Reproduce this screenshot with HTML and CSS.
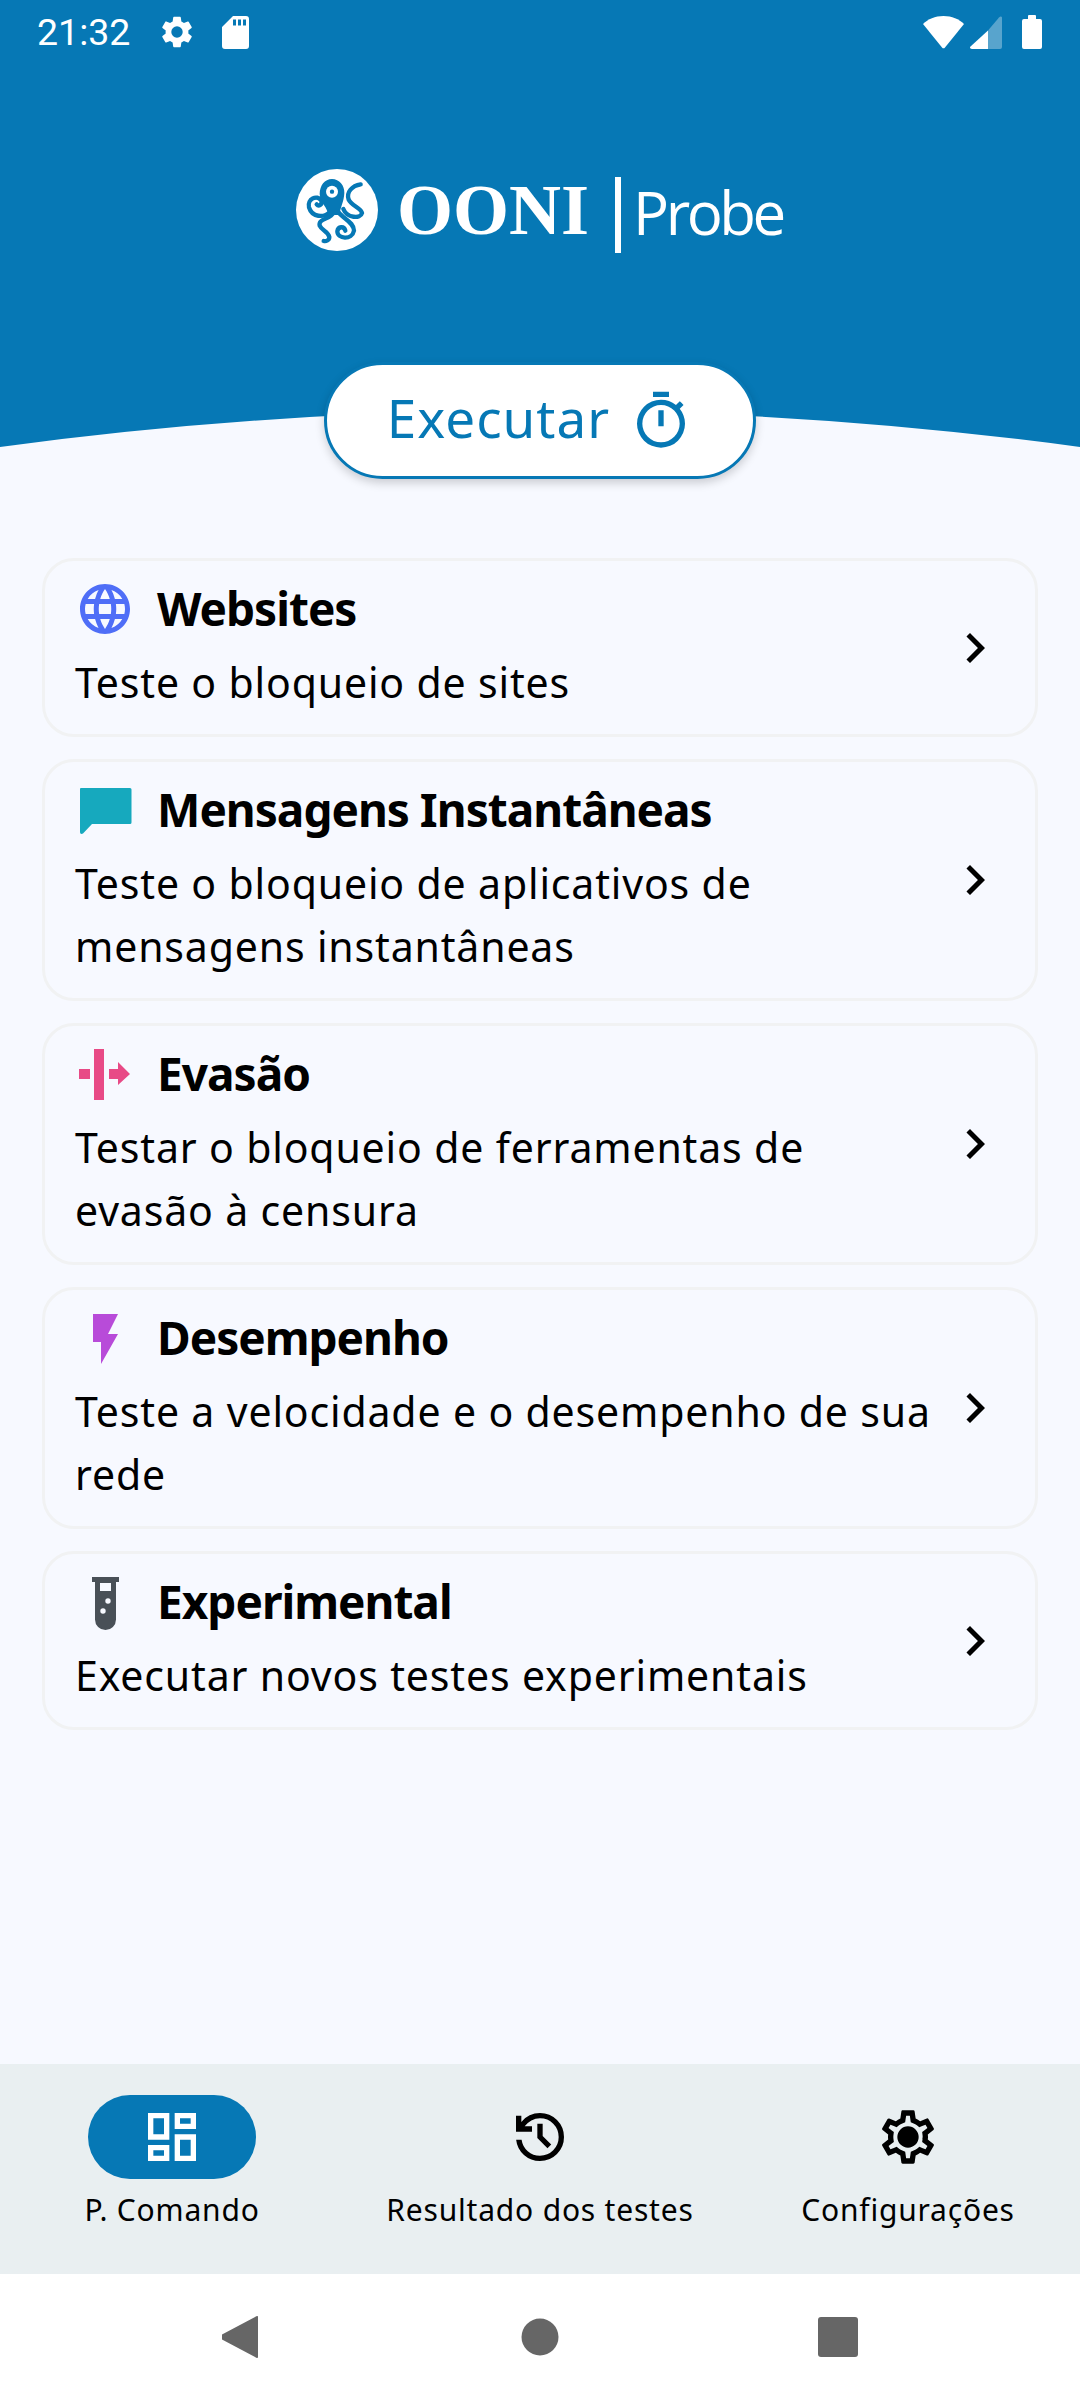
FILE: index.html
```html
<!DOCTYPE html>
<html lang="pt">
<head>
<meta charset="utf-8">
<title>OONI Probe</title>
<link rel="stylesheet" href="styles.css">
</head>
<body>
<div class="screen">
  <header class="hero">
    <div class="status">
      <span class="time">21:32</span>
      <svg class="st-gear" viewBox="0 0 24 24"><path fill="#fff" d="M19.14 12.94c.04-.3.06-.61.06-.94s-.02-.64-.07-.94l2.03-1.58a.49.49 0 0 0 .12-.61l-1.92-3.32a.49.49 0 0 0-.59-.22l-2.39.96a7 7 0 0 0-1.62-.94l-.36-2.54a.48.48 0 0 0-.48-.41h-3.84a.47.47 0 0 0-.47.41l-.36 2.54c-.59.24-1.13.57-1.62.94l-2.39-.96a.48.48 0 0 0-.59.22L2.74 8.87a.47.47 0 0 0 .12.61l2.03 1.58c-.05.3-.09.63-.09.94s.02.64.07.94l-2.03 1.58a.49.49 0 0 0-.12.61l1.92 3.32c.12.22.37.29.59.22l2.39-.96c.5.38 1.03.7 1.62.94l.36 2.54c.05.24.24.41.48.41h3.84c.24 0 .44-.17.47-.41l.36-2.54c.59-.24 1.13-.56 1.62-.94l2.39.96c.22.08.47 0 .59-.22l1.92-3.32a.47.47 0 0 0-.12-.61l-2.01-1.58zM12 15.6A3.6 3.6 0 1 1 12 8.4a3.6 3.6 0 0 1 0 7.2z"/></svg>
      <svg class="st-sd" viewBox="0 0 27 33"><path fill="#fff" fill-rule="evenodd" d="M11 0h13a3 3 0 0 1 3 3v27a3 3 0 0 1-3 3H3a3 3 0 0 1-3-3V11zM11 3.500v6h3v-6zM16 3.500v6h3v-6zM21 3.500v6h3v-6z"/></svg>
      <span class="status-gap"></span>
      <svg class="st-wifi" viewBox="0 0 41 33"><path fill="#fff" d="M0 8C5 3 12 0 20.500 0S36 3 41 8L22 31.500a2 2 0 0 1-3 0z"/></svg>
      <svg class="st-signal" viewBox="0 0 32 33"><path fill="#fff" fill-opacity=".33" d="M32 2v29a2 2 0 0 1-2 2H18V14.500L29 1.500C30.500 0 32 .5 32 2z"/><path fill="#fff" d="M18 14.500V33H2C0 33-.5 31.500.5 30.500z"/></svg>
      <svg class="st-batt" viewBox="0 0 20 34"><path fill="#fff" d="M6 1a1 1 0 0 1 1-1h6a1 1 0 0 1 1 1v3h4a2 2 0 0 1 2 2v26a2 2 0 0 1-2 2H2a2 2 0 0 1-2-2V6a2 2 0 0 1 2-2h4z"/></svg>
    </div>
    <div class="logo">
      <svg class="octopus" viewBox="22 20 246 246">
        <circle cx="145" cy="143" r="123" fill="#fff"/>
        <g fill="none" stroke="#0678b5" stroke-width="13" stroke-linecap="round" stroke-linejoin="round">
          <path d="M125 148C105 168 70 165 61 135C55 110 85 95 98 115C102 127 90 133 84 126"/>
          <path d="M216 66C190 70 172 90 180 112C188 130 218 138 220 152C216 170 175 168 164 140"/>
          <path d="M135 150C125 172 88 168 93 190C100 206 118 206 122 224C122 234 112 238 105 236"/>
          <path d="M150 150C165 170 196 180 196 205C190 235 146 230 146 207C148 192 166 190 170 205"/>
        </g>
        <path fill="#0678b5" d="M93 95C93 70 108 50 130 50C152 50 168 70 167 92C166 118 155 135 152 158H118C118 135 95 125 93 95z"/>
        <circle cx="130" cy="88" r="18" fill="#fff"/>
        <circle cx="130" cy="88" r="6.500" fill="#0678b5"/>
      </svg>
      <span class="ooni">OONI</span>
      <span class="divider"></span>
      <span class="probe">Probe</span>
    </div>
    <svg class="curve" viewBox="0 0 1080 37" preserveAspectRatio="none"><path fill="#f7f9ff" d="M0 37Q540-36 1080 37z"/></svg>
    <button class="run" type="button">
      <span class="run-label">Executar</span>
      <svg class="timer" viewBox="0 0 24 24"><path fill="#0678b5" d="M15 1H9v2h6V1zm-4 13h2V8h-2v6zm8.030-6.610 1.420-1.420c-.43-.51-.9-.99-1.410-1.410l-1.420 1.420A8.960 8.960 0 0 0 12 4a9 9 0 1 0 9 9c0-2.120-.74-4.070-1.970-5.610zM12 20a7 7 0 1 1 0-14 7 7 0 0 1 0 14z"/></svg>
    </button>
  </header>

  <main class="list">
    <a class="card">
      <div class="card-body">
        <div class="title-row">
          <svg class="ic" viewBox="0 0 24 24"><path fill="#4f6ef7" d="M11.990 2C6.470 2 2 6.480 2 12s4.470 10 9.990 10C17.520 22 22 17.520 22 12S17.520 2 11.990 2zm6.930 6h-2.950a15.650 15.650 0 0 0-1.380-3.560A8.030 8.030 0 0 1 18.920 8zM12 4.040c.83 1.200 1.480 2.530 1.910 3.960h-3.820c.43-1.430 1.080-2.760 1.910-3.960zM4.260 14C4.100 13.360 4 12.690 4 12s.1-1.360.26-2h3.380c-.08.660-.14 1.320-.14 2s.06 1.340.14 2H4.260zm.82 2h2.950c.32 1.250.78 2.450 1.380 3.560A7.987 7.987 0 0 1 5.080 16zm2.950-8H5.080a7.987 7.987 0 0 1 4.330-3.560A15.650 15.650 0 0 0 8.030 8zM12 19.960c-.83-1.200-1.480-2.530-1.910-3.960h3.820c-.43 1.430-1.080 2.760-1.910 3.960zM14.340 14H9.660c-.09-.66-.16-1.320-.16-2s.07-1.350.16-2h4.680c.09.650.16 1.320.16 2s-.07 1.340-.16 2zm.25 5.560c.6-1.110 1.060-2.310 1.380-3.560h2.950a8.030 8.030 0 0 1-4.330 3.560zM16.360 14c.08-.66.14-1.320.14-2s-.06-1.340-.14-2h3.380c.16.640.26 1.310.26 2s-.1 1.360-.26 2h-3.380z"/></svg>
          <h2>Websites</h2>
        </div>
        <p>Teste o bloqueio de sites</p>
      </div>
      <svg class="chev" viewBox="0 0 24 24"><path d="M8.590 16.590 13.170 12 8.590 7.410 10 6l6 6-6 6z"/></svg>
    </a>
    <a class="card">
      <div class="card-body">
        <div class="title-row">
          <svg class="ic" viewBox="0 0 60 60"><path fill="#16a9be" d="M6 8H55a1.500 1.500 0 0 1 1.500 1.500V42.500A1.500 1.500 0 0 1 55 44H17L8 53.500C6.500 54.500 5 54 5 52V9a1 1 0 0 1 1-1z"/></svg>
          <h2>Mensagens Instantâneas</h2>
        </div>
        <p>Teste o bloqueio de aplicativos de mensagens instantâneas</p>
      </div>
      <svg class="chev" viewBox="0 0 24 24"><path d="M8.590 16.590 13.170 12 8.590 7.410 10 6l6 6-6 6z"/></svg>
    </a>
    <a class="card">
      <div class="card-body">
        <div class="title-row">
          <svg class="ic" viewBox="0 0 60 60"><path fill="#e84a86" d="M4 25H15V35H4zM19 5H29V56H19zM34 25H43V18L55 30 43 41V35H34z"/></svg>
          <h2>Evasão</h2>
        </div>
        <p>Testar o bloqueio de ferramentas de evasão à censura</p>
      </div>
      <svg class="chev" viewBox="0 0 24 24"><path d="M8.590 16.590 13.170 12 8.590 7.410 10 6l6 6-6 6z"/></svg>
    </a>
    <a class="card">
      <div class="card-body">
        <div class="title-row">
          <svg class="ic" viewBox="0 0 60 60"><path fill="#b84bd9" d="M18 6H43L33 26H43L26 56V34H18z"/></svg>
          <h2>Desempenho</h2>
        </div>
        <p>Teste a velocidade e o desempenho de sua rede</p>
      </div>
      <svg class="chev" viewBox="0 0 24 24"><path d="M8.590 16.590 13.170 12 8.590 7.410 10 6l6 6-6 6z"/></svg>
    </a>
    <a class="card">
      <div class="card-body">
        <div class="title-row">
          <svg class="ic" viewBox="0 0 60 60"><path fill="#495057" fill-rule="evenodd" d="M17 5H44V10H41V47.500A10.500 10.500 0 0 1 20 47.500V10H17zM25 11V19H36V11zM33 26.300A2.700 2.700 0 1 0 33 31.700 2.700 2.700 0 0 0 33 26.300zM28 36.300A2.700 2.700 0 1 0 28 41.700 2.700 2.700 0 0 0 28 36.300z"/></svg>
          <h2>Experimental</h2>
        </div>
        <p>Executar novos testes experimentais</p>
      </div>
      <svg class="chev" viewBox="0 0 24 24"><path d="M8.590 16.590 13.170 12 8.590 7.410 10 6l6 6-6 6z"/></svg>
    </a>
  </main>

  <nav class="tabs">
    <div class="tab">
      <span class="pill active"><svg class="tab-ic" viewBox="0 0 24 24"><path fill="#fff" d="M19 5v2h-4V5h4M9 5v6H5V5h4m10 8v6h-4v-6h4M9 17v2H5v-2h4M21 3h-8v6h8V3zM11 3H3v10h8V3zm10 8h-8v10h8V11zm-10 4H3v6h8v-6z"/></svg></span>
      <span class="tab-label">P. Comando</span>
    </div>
    <div class="tab">
      <span class="pill"><svg class="tab-ic" viewBox="0 0 24 24"><path d="M12 21q-3.450 0-6.012-2.287T3.050 13H5.100q.35 2.600 2.313 4.300T12 19q2.925 0 4.963-2.037T19 12q0-2.925-2.037-4.963T12 5q-1.725 0-3.225.8T6.250 8H9v2H3V4h2v2.350q1.275-1.600 3.113-2.475T12 3q3.750 0 6.375 2.625T21 12q0 3.750-2.625 6.375T12 21zm2.800-4.800L11 12.400V7h2v4.600l3.200 3.200-1.400 1.400z"/></svg></span>
      <span class="tab-label">Resultado dos testes</span>
    </div>
    <div class="tab">
      <span class="pill"><svg class="tab-ic" viewBox="0 0 24 24"><path d="M19.430 12.980c.04-.32.070-.64.070-.98 0-.34-.03-.66-.07-.98l2.110-1.650c.19-.15.240-.42.120-.64l-2-3.460a.5.500 0 0 0-.610-.22l-2.490 1c-.52-.4-1.080-.73-1.690-.98l-.38-2.650A.488.488 0 0 0 14 2h-4c-.25 0-.46.180-.49.420l-.38 2.650c-.61.250-1.170.590-1.690.98l-2.490-1a.566.566 0 0 0-.18-.03c-.17 0-.34.090-.43.250l-2 3.460c-.13.220-.07.490.12.640l2.110 1.650c-.04.320-.07.650-.07.980s.03.660.07.980l-2.110 1.650c-.19.150-.24.420-.12.640l2 3.460a.5.500 0 0 0 .610.22l2.490-1c.52.400 1.080.730 1.690.980l.38 2.650c.03.240.24.420.49.420h4c.25 0 .46-.18.49-.42l.38-2.650c.61-.25 1.170-.59 1.690-.98l2.490 1c.06.020.12.030.18.030.17 0 .34-.09.430-.25l2-3.460c.12-.22.070-.49-.12-.64l-2.110-1.650zm-1.980-1.710c.04.310.05.520.05.730 0 .21-.2.430-.05.730l-.14 1.130.89.700 1.080.84-.7 1.210-1.270-.51-1.040-.42-.9.680c-.43.320-.84.560-1.250.73l-1.060.43-.16 1.130-.2 1.350h-1.400l-.19-1.350-.16-1.130-1.060-.43c-.43-.18-.83-.41-1.230-.71l-.91-.7-1.060.43-1.270.51-.7-1.210 1.080-.84.890-.7-.14-1.130c-.03-.31-.05-.54-.05-.74s.02-.43.050-.73l.14-1.130-.89-.7-1.080-.84.7-1.210 1.270.51 1.040.42.900-.68c.43-.32.840-.56 1.250-.73l1.060-.43.16-1.130.2-1.350h1.390l.19 1.350.16 1.130 1.060.43c.43.18.83.410 1.230.71l.91.700 1.060-.43 1.270-.51.7 1.210-1.070.85-.89.7.14 1.130zM12 8a4 4 0 1 0 0 8 4 4 0 0 0 0-8z"/></svg></span>
      <span class="tab-label">Configurações</span>
    </div>
  </nav>

  <footer class="sysnav">
    <svg class="sys" viewBox="2 0 40 44"><path fill="#666" d="M38 2v40a1 1 0 0 1-1.600.8L1 24a2.500 2.500 0 0 1 0-4L36.400 1.200A1 1 0 0 1 38 2z"/></svg>
    <svg class="sys" viewBox="0 0 40 44"><circle cx="20" cy="22" r="18.500" fill="#666"/></svg>
    <svg class="sys" viewBox="0 0 40 44"><rect x="0" y="2" width="40" height="40" rx="3" fill="#666"/></svg>
  </footer>
</div>
</body>
</html>
```
FILE: styles.css
```css
* { box-sizing: border-box; }
html, body { margin: 0; padding: 0; }
body { background: #f7f9ff; font-family: "Noto Sans", "Open Sans", sans-serif; color: #000; }
.screen { width: 1080px; height: 2400px; display: flex; flex-direction: column; overflow: hidden; }

.hero { position: relative; height: 447px; background: #0678b5; display: flex; flex-direction: column; flex: none; }
.status { height: 64px; padding: 0 38px 0 37px; display: flex; align-items: center; color: #fff; flex: none; }
.time { font: 400 37.500px "Roboto", sans-serif; line-height: 64px; }
.st-gear { width: 38px; height: 38px; margin-left: 28px; }
.st-sd { width: 27px; height: 33px; margin-left: 26px; }
.status-gap { flex: 1; }
.st-wifi { width: 41px; height: 33px; }
.st-signal { width: 32px; height: 33px; margin-left: 6px; }
.st-batt { width: 20px; height: 34px; margin-left: 20px; }

.logo { display: flex; align-items: center; margin: 105px 0 0 296px; height: 82px; color: #fff; }
.octopus { width: 82px; height: 82px; flex: none; }
.ooni { font: 700 72px "Liberation Serif", serif; margin-left: 19px; line-height: 82px; }
.divider { width: 6px; height: 76px; background: #fff; margin: 10px 0 0 26px; flex: none; }
.probe { font: 400 60px "Open Sans", sans-serif; margin: 4px 0 0 12px; line-height: 82px; letter-spacing: -3.500px; }

.curve { position: absolute; left: 0; bottom: 0; width: 1080px; height: 37px; display: block; }
.run { position: absolute; left: 324px; top: 362px; width: 432px; height: 117px; border: 3px solid #0678b5; border-radius: 59px; background: #fff; display: flex; align-items: center; justify-content: center; gap: 19px; color: #0678b5; font: 400 53px "Noto Sans", sans-serif; letter-spacing: 1px; padding: 0; box-shadow: 0 4px 10px rgba(0, 0, 0, .18); }
.run-label { margin-bottom: 6px; }
.timer { width: 64px; height: 64px; }

.list { flex: 1; padding: 111px 42px 0; display: flex; flex-direction: column; gap: 22px; }
.card { border: 3px solid #f1f2f3; border-radius: 32px; display: flex; align-items: center; padding: 18px 30px 20px 30px; }
.card-body { flex: 1; min-width: 0; }
.title-row { display: flex; align-items: center; height: 60px; margin-bottom: 12px; }
.ic { width: 60px; height: 60px; margin-right: 22px; flex: none; }
h2 { margin: 0 0 2px; font-size: 46px; font-weight: 700; line-height: 58px; letter-spacing: -1px; }
p { margin: 0; font-size: 41px; line-height: 63px; letter-spacing: .85px; }
.chev { width: 60px; height: 60px; flex: none; margin-top: 2px; }

.tabs { height: 210px; background: #e9eff1; display: grid; grid-template-columns: repeat(3, 1fr); column-gap: 32px; flex: none; padding: 31px 4px 0; }
.tab { display: flex; flex-direction: column; align-items: center; }
.pill { width: 168px; height: 84px; border-radius: 42px; display: flex; align-items: center; justify-content: center; }
.pill.active { background: #0678b5; }
.tab-ic { width: 64px; height: 64px; }
.tab-label { font-size: 30px; line-height: 40px; margin-top: 11px; letter-spacing: .8px; white-space: nowrap; }

.sysnav { height: 126px; background: #fff; display: flex; align-items: center; justify-content: center; gap: 258px; flex: none; }
.sys { width: 40px; height: 44px; }
```
